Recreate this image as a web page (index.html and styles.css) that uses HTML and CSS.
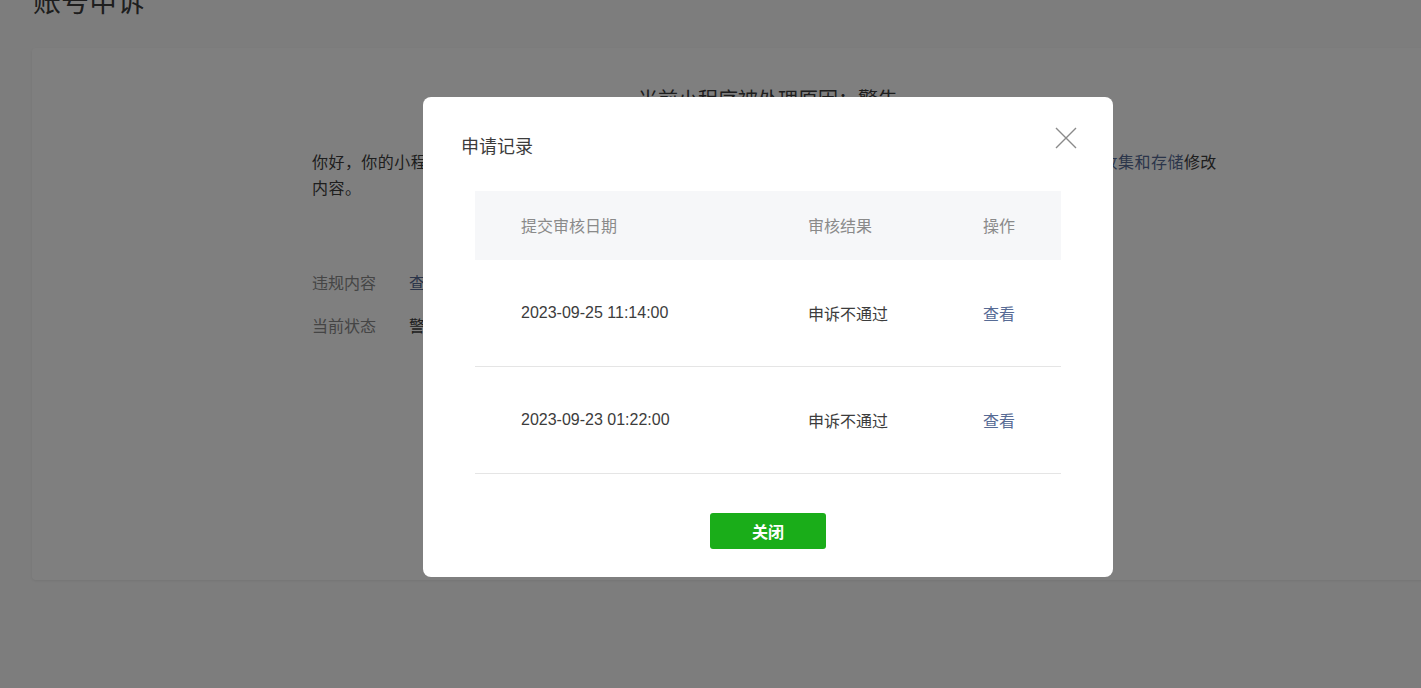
FILE: index.html
```html
<!DOCTYPE html>
<html lang="zh-CN">
<head>
  <meta charset="UTF-8" />
  <title>账号申诉</title>
  <link rel="stylesheet" href="styles.css">
</head>
<body>

  <div class="page">
    <h1 class="page-title">账号申诉</h1>

    <!-- Appeal details card -->
    <div class="card">
      <h2 class="card-title">当前小程序被处理原因：警告</h2>
      <div class="card-body">
        <p class="notice">
          你好，你的小程序涉嫌未经用户同意收集用户个人信息的情况，请你在小程序内补充说明并在隐私协议中说明<a class="link" href="#">收集和存储</a>修改内容。
        </p>
        <div class="info-row">
          <span class="info-label">违规内容</span>
          <a class="link" href="#">查看详情</a>
        </div>
        <div class="info-row">
          <span class="info-label">当前状态</span>
          <span>警告</span>
        </div>
      </div>
    </div>
  </div>

  <!-- Dialog: appeal records -->
  <div class="mask">
    <div class="dialog">
      <h3 class="dialog-title">申请记录</h3>
      <button class="dialog-close" type="button" aria-label="关闭">
        <svg width="22" height="22" viewBox="0 0 22 22">
          <path d="M1 1L21 21M21 1L1 21" stroke="#8a8a8a" stroke-width="1.4" fill="none" />
        </svg>
      </button>

      <div class="records">
        <div class="records-row records-head">
          <div class="col-date">提交审核日期</div>
          <div>审核结果</div>
          <div>操作</div>
        </div>
        <div class="records-row">
          <div class="col-date">2023-09-25 11:14:00</div>
          <div>申诉不通过</div>
          <div><a class="link" href="#">查看</a></div>
        </div>
        <div class="records-row">
          <div class="col-date">2023-09-23 01:22:00</div>
          <div>申诉不通过</div>
          <div><a class="link" href="#">查看</a></div>
        </div>
      </div>

      <div class="dialog-footer">
        <button class="btn-primary" type="button">关闭</button>
      </div>
    </div>
  </div>

</body>
</html>
```

FILE: styles.css
```css
html, body {
  margin: 0;
  height: 100%;
  overflow: hidden;
}
body {
  font-family: "Liberation Sans", "Noto Sans CJK SC", sans-serif;
  font-size: 16px;
  color: #3c3c3c;
  background: #fbfbfb;
  position: relative;
}
a {
  text-decoration: none;
}
.link {
  color: #576b95;
}

/* page */
.page {
  padding-left: 32px;
  width: 1472px;
}
.page-title {
  margin: -17px 0 25px 1px;
  font-size: 28px;
  line-height: 40px;
  font-weight: normal;
}
.card {
  background: #fff;
  height: 532px;
  box-sizing: border-box;
  border-radius: 4px;
  box-shadow: 0 1px 3px rgba(0, 0, 0, 0.08);
  padding-top: 38px;
}
.card-title {
  margin: 0;
  text-align: center;
  font-size: 20px;
  line-height: 28px;
  font-weight: normal;
}
.card-body {
  width: 912px;
  margin: 36px auto 0;
}
.notice {
  margin: 0 0 69px;
  line-height: 26px;
  letter-spacing: 0.45px;
}
.info-row {
  display: flex;
  line-height: 26px;
  margin-bottom: 17px;
}
.info-label {
  width: 97px;
  color: #8a8a8a;
}

/* dialog */
.mask {
  position: absolute;
  top: 0;
  left: 0;
  width: 1536px;
  height: 100%;
  background: rgba(0, 0, 0, 0.5);
  display: flex;
  justify-content: center;
  align-items: flex-start;
  padding-top: 97px;
  box-sizing: border-box;
}
.dialog {
  position: relative;
  width: 690px;
  box-sizing: border-box;
  background: #fff;
  border-radius: 8px;
  padding: 37px 52px 28px;
}
.dialog-title {
  margin: 0 0 31px -14px;
  font-size: 18px;
  line-height: 26px;
  font-weight: normal;
}
.dialog-close {
  position: absolute;
  top: 30px;
  right: 36px;
  padding: 0;
  border: none;
  background: none;
  cursor: pointer;
  line-height: 0;
}
.records-row {
  display: grid;
  grid-template-columns: 333px 175px 1fr;
  align-items: center;
  height: 106px;
  border-bottom: 1px solid #e5e5e5;
}
.records-head {
  height: 67px;
  padding-bottom: 2px;
  background: #f6f7f9;
  border-bottom: none;
  color: #8a8a8a;
}
.col-date {
  padding-left: 46px;
}
.dialog-footer {
  display: flex;
  justify-content: center;
  margin-top: 39px;
}
.btn-primary {
  width: 116px;
  height: 36px;
  border: none;
  border-radius: 3px;
  background: #1aad19;
  color: #fff;
  font-family: inherit;
  font-size: 16px;
  font-weight: bold;
  cursor: pointer;
}
```
